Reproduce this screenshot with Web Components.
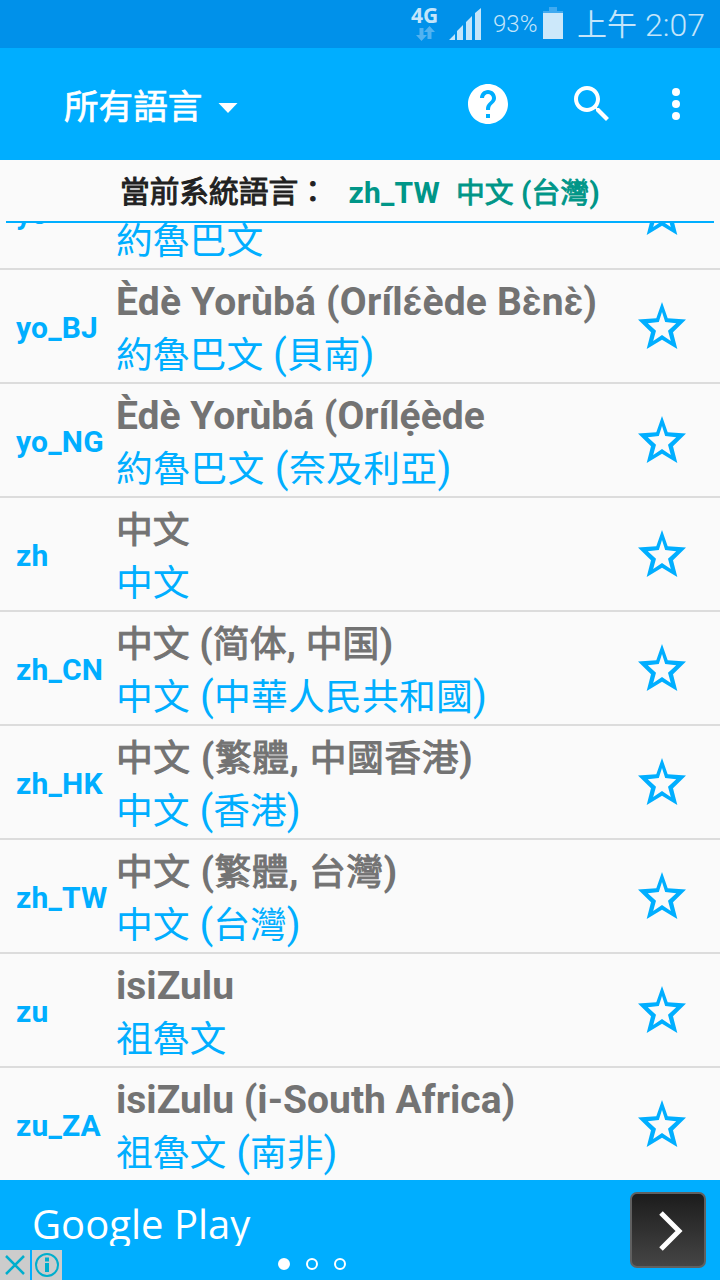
<!DOCTYPE html>
<html lang="zh-Hant">
<head>
<meta charset="utf-8">
<title>所有語言</title>
<style>
  body {
    background: #fafafa;
    display: flex;
    flex-direction: column;
    font-family: Roboto, 'Noto Sans CJK TC', sans-serif;
    height: 1280px;
    margin: 0;
    overflow: hidden;
    width: 720px;
  }
</style>
</head>
<body>
<status-bar network="4G" battery="93%" time="2:07">上午</status-bar>
<app-bar>所有語言</app-bar>
<current-locale code="zh_TW" name="中文 (台灣)">當前系統語言：</current-locale>
<locale-list>
  <locale-row code="yo" label="約魯巴文"></locale-row>
  <locale-row code="yo_BJ" name="Èdè Yorùbá (Orílɛ́ède Bɛ̀nɛ̀)" name-spacing="0.2px" label="約魯巴文 (貝南)"></locale-row>
  <locale-row code="yo_NG" name="Èdè Yorùbá (Orílẹ́ède" label="約魯巴文 (奈及利亞)" label-spacing="0.35px"></locale-row>
  <locale-row code="zh" name="中文" label="中文"></locale-row>
  <locale-row code="zh_CN" name="中文 (简体, 中国)" label="中文 (中華人民共和國)" label-spacing="0.2px"></locale-row>
  <locale-row code="zh_HK" name="中文 (繁體, 中國香港)" name-spacing="0.5px" label="中文 (香港)"></locale-row>
  <locale-row code="zh_TW" name="中文 (繁體, 台灣)" name-spacing="0.4px" label="中文 (台灣)"></locale-row>
  <locale-row code="zu" name="isiZulu" label="祖魯文"></locale-row>
  <locale-row code="zu_ZA" name="isiZulu (i-South Africa)" label="祖魯文 (南非)"></locale-row>
</locale-list>
<ad-banner>Google Play</ad-banner>

<script>
// Han glyphs are set a little smaller than the Latin ones around them
class MixedText extends HTMLElement {
  constructor() {
    super();

    const template = document.createElement( 'template' );
    template.innerHTML = `
      <style>
        :host {
          display: block;
        }

        div {
          white-space: pre;
        }

        span {
          font-family: 'Noto Sans CJK TC', sans-serif;
          font-size: var( --han-size, 0.92em );
          font-weight: 400;
          line-height: 0;
          -webkit-text-stroke: var( --han-stroke, 0 );
        }
      </style>
      <div></div>
    `;

    const shadowRoot = this.attachShadow( {mode: 'open'} );
    shadowRoot.appendChild( template.content.cloneNode( true ) );

    this.$line = shadowRoot.querySelector( 'div' );
  }

  static get observedAttributes() {
    return [
      'spacing',
      'text'
    ];
  }

  attributeChangedCallback( name, old, value ) {
    this.$line.style.letterSpacing = this.spacing;
    this.$line.textContent = '';

    for( const run of this.text.match( /[\u4e00-\u9fff]+|[^\u4e00-\u9fff]+/g ) || [] ) {
      if( /[\u4e00-\u9fff]/.test( run ) ) {
        const span = document.createElement( 'span' );
        span.textContent = run;
        this.$line.appendChild( span );
      } else {
        this.$line.appendChild( document.createTextNode( run ) );
      }
    }
  }

  get spacing() {
    return this.getAttribute( 'spacing' ) || 'normal';
  }

  get text() {
    return this.getAttribute( 'text' ) || '';
  }
}

window.customElements.define( 'mixed-text', MixedText );

class StatusBar extends HTMLElement {
  constructor() {
    super();

    const template = document.createElement( 'template' );
    template.innerHTML = `
      <style>
        :host {
          background: #0091ea;
          box-sizing: border-box;
          color: #c4e5fa;
          display: flex;
          flex: none;
          height: 48px;
          padding-left: 411px;
        }

        .network {
          display: flex;
          flex-direction: column;
          font: 700 21px/20px 'Open Sans', sans-serif;
          padding-top: 5px;
          width: 38px;
        }

        .arrows {
          margin: 1px 0 0 5px;
        }

        .battery {
          font-size: 24px;
          font-weight: 300;
          line-height: 48px;
          margin-left: 10px;
          width: 50px;
        }

        .time {
          display: flex;
          font-size: 32px;
          font-weight: 300;
          line-height: 50px;
          margin-left: 14px;
        }

        .time slot {
          display: block;
          font-family: 'Noto Sans CJK TC', sans-serif;
          font-size: 30px;
          font-weight: 350;
          line-height: 45px;
          width: 68px;
        }

        svg {
          display: block;
          flex: none;
        }
      </style>
      <div class="network">
        <span></span>
        <svg class="arrows" width="20" height="16" fill="#52b2f0">
          <path d="M3.500 2h4v7H11l-5.500 6L0 9h3.500z M11.500 13h4V6H19l-5.500-6L8 6h3.500z"/>
        </svg>
      </div>
      <svg width="34" height="48" fill="currentColor">
        <path d="M0 40l6-6v6z M8 40V31l6-6v15z M17 40V22l6-6v24z M26 40V13l6-5v32z"/>
      </svg>
      <div class="battery"></div>
      <svg width="20" height="48">
        <path d="M6 7h8v4h6v2H0v-2h6z" fill="#40aaf0"/>
        <path d="M0 13h20v26H0z" fill="#cce8fa"/>
      </svg>
      <div class="time"><slot></slot><span></span></div>
    `;

    const shadowRoot = this.attachShadow( {mode: 'open'} );
    shadowRoot.appendChild( template.content.cloneNode( true ) );

    shadowRoot.querySelector( '.network span' ).textContent = this.getAttribute( 'network' );
    shadowRoot.querySelector( '.battery' ).textContent = this.getAttribute( 'battery' );
    shadowRoot.querySelector( '.time span' ).textContent = this.getAttribute( 'time' );
  }
}

window.customElements.define( 'status-bar', StatusBar );

class AppBar extends HTMLElement {
  constructor() {
    super();

    const template = document.createElement( 'template' );
    template.innerHTML = `
      <style>
        :host {
          align-items: center;
          background: #00aeff;
          box-sizing: border-box;
          color: #ffffff;
          display: flex;
          flex: none;
          height: 112px;
          padding-left: 64px;
        }

        .title {
          font-family: 'Noto Sans CJK TC', sans-serif;
          font-size: 34.6px;
          font-weight: 400;
          line-height: 50px;
          padding-bottom: 1px;
          width: 154px;
          -webkit-text-stroke: 0.7px;
        }

        svg {
          display: block;
          fill: currentColor;
          flex: none;
        }

        .help {
          margin-left: 226px;
        }

        .search {
          margin-left: 56px;
        }

        .more {
          margin-left: 55px;
        }
      </style>
      <div class="title"><slot></slot></div>
      <svg width="20" height="112"><path d="M0.500 55h19l-9.500 10z"/></svg>
      <svg class="help" width="48" height="48" viewBox="0 0 24 24">
        <path d="M12 2C6.480 2 2 6.480 2 12s4.480 10 10 10 10-4.480 10-10S17.520 2 12 2zm1 17h-2v-2h2v2zm2.070-7.750l-.9.920C13.450 12.900 13 13.500 13 15h-2v-.5c0-1.100.450-2.100 1.170-2.830l1.240-1.260c.370-.360.590-.860.590-1.410 0-1.100-.9-2-2-2s-2 .9-2 2H8c0-2.210 1.790-4 4-4s4 1.790 4 4c0 .880-.360 1.680-.930 2.250z"/>
      </svg>
      <svg class="search" width="48" height="48" viewBox="0 0 24 24">
        <path d="M15.500 14h-.790l-.280-.270C15.410 12.590 16 11.110 16 9.500 16 5.910 13.090 3 9.500 3S3 5.910 3 9.500 5.910 16 9.500 16c1.610 0 3.090-.590 4.230-1.570l.270.280v.790l5 4.990L20.490 19l-4.990-5zm-6 0C7.010 14 5 11.990 5 9.500S7.010 5 9.500 5 14 7.010 14 9.500 11.990 14 9.500 14z"/>
      </svg>
      <svg class="more" width="10" height="48">
        <circle cx="5" cy="12" r="4"/><circle cx="5" cy="24" r="4"/><circle cx="5" cy="36" r="4"/>
      </svg>
    `;

    const shadowRoot = this.attachShadow( {mode: 'open'} );
    shadowRoot.appendChild( template.content.cloneNode( true ) );
  }
}

window.customElements.define( 'app-bar', AppBar );

class CurrentLocale extends HTMLElement {
  constructor() {
    super();

    const template = document.createElement( 'template' );
    template.innerHTML = `
      <style>
        :host {
          border-bottom: solid 2px #00aeff;
          box-sizing: border-box;
          display: flex;
          flex: none;
          font-size: 30px;
          font-weight: 700;
          height: 63px;
          line-height: 65px;
          margin: 0 6px;
          padding-left: 114px;
        }

        slot {
          color: #212121;
          display: block;
          font-family: 'Noto Sans CJK TC', sans-serif;
          font-size: 29.700px;
          font-weight: 400;
          line-height: 60px;
          width: 228.500px;
          -webkit-text-stroke: 1px;
        }

        .code, .name {
          color: #009688;
        }

        .code {
          letter-spacing: 0.2px;
          width: 107.500px;
        }

        .name {
          --han-size: 0.96em;
          --han-stroke: 0.9px;
        }
      </style>
      <slot></slot>
      <div class="code"></div>
      <mixed-text class="name"></mixed-text>
    `;

    const shadowRoot = this.attachShadow( {mode: 'open'} );
    shadowRoot.appendChild( template.content.cloneNode( true ) );

    shadowRoot.querySelector( '.code' ).textContent = this.getAttribute( 'code' );
    shadowRoot.querySelector( '.name' ).setAttribute( 'text', this.getAttribute( 'name' ) );
  }
}

window.customElements.define( 'current-locale', CurrentLocale );

class LocaleList extends HTMLElement {
  constructor() {
    super();

    // Scrolled to the end, so the rows hang from the bottom edge
    const template = document.createElement( 'template' );
    template.innerHTML = `
      <style>
        :host {
          display: flex;
          flex: 1 1 0;
          flex-direction: column;
          justify-content: flex-end;
          min-height: 0;
          overflow: hidden;
        }

        ::slotted( :last-child ) {
          margin-bottom: -2px;
        }
      </style>
      <slot></slot>
    `;

    const shadowRoot = this.attachShadow( {mode: 'open'} );
    shadowRoot.appendChild( template.content.cloneNode( true ) );
  }
}

window.customElements.define( 'locale-list', LocaleList );

class LocaleRow extends HTMLElement {
  constructor() {
    super();

    const template = document.createElement( 'template' );
    template.innerHTML = `
      <style>
        :host {
          align-items: center;
          border-bottom: solid 2px #dcdcdc;
          box-sizing: border-box;
          color: #00aeff;
          display: flex;
          flex: none;
          height: 114px;
          padding: 0 34px 0 16px;
        }

        .code {
          font-size: 30px;
          font-weight: 700;
          letter-spacing: 0.2px;
          line-height: 36px;
          padding-top: 3px;
          width: 100px;
        }

        .text {
          flex: 1 1 0;
          font-size: 40px;
          height: 100px;
          line-height: 52px;
          min-width: 0;
        }

        .name {
          color: #737373;
          font-size: 39px;
          font-weight: 700;
          height: 53px;
          --han-size: 36.800px;
          --han-stroke: 1px;
        }

        svg {
          display: block;
          fill: currentColor;
          fill-rule: evenodd;
          flex: none;
          margin-bottom: 1px;
        }
      </style>
      <div class="code"></div>
      <div class="text">
        <mixed-text class="name"></mixed-text>
        <mixed-text class="label"></mixed-text>
      </div>
      <svg width="48" height="48" viewBox="0 0 48 48">
        <path d="M24 0l5.700 16.200L48 17.500 35 30.300 39.300 47 24 37.800 8.700 47 13 30.300 0 17.500l18.300-1.300z M24 10l-3.200 10-11 1.200 8.200 7.600-2.800 10.200L24 33l8.800 6-2.800-10.200 8.200-7.600-11-1.200z"/>
      </svg>
    `;

    const shadowRoot = this.attachShadow( {mode: 'open'} );
    shadowRoot.appendChild( template.content.cloneNode( true ) );

    shadowRoot.querySelector( '.code' ).textContent = this.getAttribute( 'code' );

    for( const part of ['name', 'label'] ) {
      const $part = shadowRoot.querySelector( '.' + part );
      $part.setAttribute( 'spacing', this.getAttribute( part + '-spacing' ) || '' );
      $part.setAttribute( 'text', this.getAttribute( part ) || '' );
    }
  }
}

window.customElements.define( 'locale-row', LocaleRow );

class AdBanner extends HTMLElement {
  constructor() {
    super();

    const template = document.createElement( 'template' );
    template.innerHTML = `
      <style>
        :host {
          background: #00aeff;
          color: #ffffff;
          display: grid;
          flex: none;
          grid-template-columns: 278px 1fr 76px;
          grid-template-rows: 70px 30px;
          height: 100px;
          padding-right: 14px;
        }

        .title {
          font: 400 40px/87px 'Open Sans', sans-serif;
          height: 66px;
          overflow: hidden;
          padding-left: 32px;
        }

        .badges {
          display: flex;
          gap: 2px;
          grid-row: 2;
        }

        .pager {
          grid-column: 2;
          grid-row: 2;
        }

        .next {
          background: linear-gradient( #1c1c1c, #454545 );
          border: solid 2px #606060;
          border-radius: 7px;
          box-sizing: border-box;
          grid-column: 3;
          grid-row: 1 / 3;
          height: 76px;
          margin-top: 12px;
          width: 76px;
        }

        svg {
          display: block;
          fill: none;
        }
      </style>
      <div class="title"><slot></slot></div>
      <div class="badges">
        <svg width="30" height="30" stroke="#00aecd" stroke-width="2.500">
          <path d="M0 0h30v30H0z" fill="#cccccc" stroke="none"/>
          <path d="M6 6l18 18M24 6L6 24"/>
        </svg>
        <svg width="30" height="30" stroke="#00aecd" stroke-width="2">
          <path d="M0 0h30v30H0z" fill="#cccccc" stroke="none"/>
          <circle cx="15" cy="15" r="11"/>
          <path d="M15 7.500v4M15 13v9" stroke-width="4"/>
        </svg>
      </div>
      <svg class="pager" width="70" height="30" stroke="#ffffff" stroke-width="2">
        <circle cx="6" cy="14" r="5" fill="#ffffff"/>
        <circle cx="34" cy="14" r="5"/>
        <circle cx="62" cy="14" r="5"/>
      </svg>
      <div class="next">
        <svg width="72" height="72" stroke="#ffffff" stroke-width="5"><path d="M29 19l18 18-18 18"/></svg>
      </div>
    `;

    const shadowRoot = this.attachShadow( {mode: 'open'} );
    shadowRoot.appendChild( template.content.cloneNode( true ) );
  }
}

window.customElements.define( 'ad-banner', AdBanner );
</script>
</body>
</html>
